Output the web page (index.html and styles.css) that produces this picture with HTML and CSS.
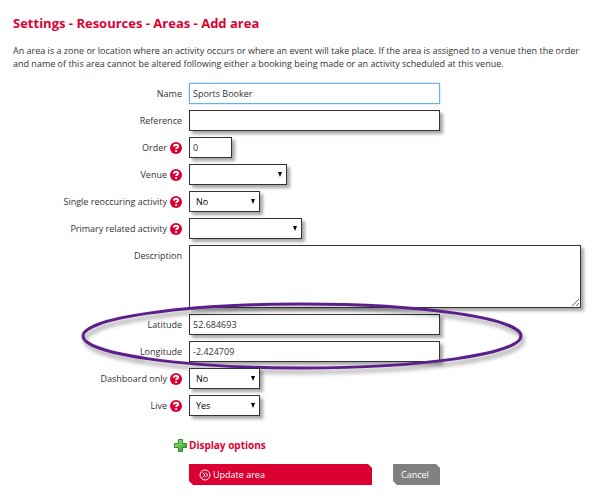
FILE: index.html
```html
<!DOCTYPE html>
<html lang="en">
<head>
    <meta charset="UTF-8">
    <title>Settings - Resources - Areas - Add area</title>
    <meta name="viewport" content="width=device-width, initial-scale=1">
    <link rel="stylesheet" href="styles.css">
</head>
<body>
    <svg class="sprite" aria-hidden="true">
        <symbol id="icon-help" viewBox="0 0 12 12">
            <circle cx="6" cy="6" r="6" fill="#dc0032"/>
            <path d="M3.900 4.600C4 3.300 4.800 2.800 6 2.800s2.200.6 2.200 1.600C8.200 5.600 6.100 5.500 6.100 7.100" fill="none" stroke="#fff" stroke-width="1.900"/>
            <circle cx="6.100" cy="9" r="1.100" fill="#fff"/>
        </symbol>
    </svg>
    <main>
        <h1>Settings - Resources - Areas - Add area</h1>
        <p class="intro">An area is a zone or location where an activity occurs or where an event will take place. If the area is assigned to a venue then the order and name of this area cannot be altered following either a booking being made or an activity scheduled at this venue.</p>
        <form>
            <div class="row">
                <label for="name">Name</label>
                <input type="text" id="name" class="long active" value="Sports Booker">
            </div>
            <div class="row">
                <label for="reference">Reference</label>
                <input type="text" id="reference" class="long">
            </div>
            <div class="row">
                <label for="order">Order <svg class="help"><use href="#icon-help"/></svg></label>
                <input type="text" id="order" class="tiny" value="0">
            </div>
            <div class="row">
                <label for="venue">Venue <svg class="help"><use href="#icon-help"/></svg></label>
                <div class="select venue">
                    <select id="venue"><option></option></select>
                </div>
            </div>
            <div class="row">
                <label for="single">Single reoccuring activity <svg class="help"><use href="#icon-help"/></svg></label>
                <div class="select">
                    <select id="single"><option>No</option><option>Yes</option></select>
                </div>
            </div>
            <div class="row">
                <label for="primary">Primary related activity <svg class="help"><use href="#icon-help"/></svg></label>
                <div class="select primary">
                    <select id="primary"><option></option></select>
                </div>
            </div>
            <div class="row">
                <label for="description">Description</label>
                <textarea id="description"></textarea>
            </div>
            <div class="coords">
                <div class="row">
                    <label for="latitude">Latitude</label>
                    <input type="text" id="latitude" class="long" value="52.684693">
                </div>
                <div class="row">
                    <label for="longitude">Longitude</label>
                    <input type="text" id="longitude" class="long" value="-2.424709">
                </div>
                <svg class="ring" viewBox="0 0 440 66" aria-hidden="true">
                    <ellipse cx="220" cy="33" rx="219" ry="32" fill="none" stroke="#5c1f8b" stroke-width="3"/>
                </svg>
            </div>
            <div class="row">
                <label for="dashboard">Dashboard only <svg class="help"><use href="#icon-help"/></svg></label>
                <div class="select">
                    <select id="dashboard"><option>No</option><option>Yes</option></select>
                </div>
            </div>
            <div class="row">
                <label for="live">Live <svg class="help"><use href="#icon-help"/></svg></label>
                <div class="select">
                    <select id="live"><option>Yes</option><option>No</option></select>
                </div>
            </div>
            <a class="options" href="#">
                <svg viewBox="0 0 13 13" aria-hidden="true">
                    <defs>
                        <linearGradient id="green" x1="0" y1="0" x2="1" y2="1">
                            <stop offset="0" stop-color="#a5e67c"/>
                            <stop offset="1" stop-color="#1fa31f"/>
                        </linearGradient>
                    </defs>
                    <path d="M4.500 .5h4v4h4v4h-4v4h-4v-4h-4v-4h4z" fill="url(#green)" stroke="#35893a" stroke-linejoin="round"/>
                </svg>
                Display options
            </a>
            <div class="buttons">
                <button type="submit" class="update">
                    <svg viewBox="0 0 12 12" aria-hidden="true">
                        <circle cx="6" cy="6" r="5"/>
                        <path d="M3.500 3.500L6 6 3.500 8.500M6.200 3.500L8.700 6 6.200 8.500"/>
                    </svg>
                    Update area
                </button>
                <button type="button" class="cancel">Cancel</button>
            </div>
        </form>
    </main>
</body>
</html>
```
FILE: styles.css
```css
* {
    box-sizing: border-box;
}

body {
    margin: 0;
    background-color: #fff;
    font-family: "Open Sans", sans-serif;
    font-size: 9px;
    line-height: 13px;
    color: #333;
}

.sprite {
    display: none;
}

main {
    padding: 14px 13px;
}

h1 {
    margin: 0 0 12px;
    font-size: 13px;
    line-height: 18px;
    color: #dc0032;
}

.intro {
    margin: 0 0 13px;
    padding-right: 10px;
}

form,
.coords {
    display: flex;
    flex-direction: column;
    gap: 6px;
}

.row {
    display: grid;
    grid-template-columns: 169px 1fr;
    column-gap: 7px;
}

label {
    display: flex;
    justify-content: flex-end;
    align-items: center;
    gap: 3px;
    height: 21px;
}

.help {
    width: 12px;
    height: 12px;
}

input,
select,
textarea {
    margin: 0;
    border: 1px solid #333;
    border-radius: 0;
    background-color: #fff;
    font: inherit;
    color: #333;
    box-shadow: 3px 3px 3px rgba(0, 0, 0, 0.35);
}

input {
    height: 21px;
    padding: 0 3px;
}

.long {
    width: 100%;
    max-width: 251px;
}

.tiny {
    width: 43px;
}

.active {
    border-color: #66aff0;
    box-shadow: 0 0 2px #a8d0f8;
    outline: none;
}

textarea {
    display: block;
    width: 100%;
    max-width: 392px;
    height: 63px;
}

/* Drop-downs */
.select {
    position: relative;
    width: 71px;
}

.select.venue {
    width: 98px;
}

.select.primary {
    width: 113px;
}

.select select {
    display: block;
    width: 100%;
    height: 21px;
    padding: 0 6px;
    appearance: none;
    color: #000;
}

.select::after {
    content: "";
    position: absolute;
    top: 8px;
    right: 5px;
    border: 2px solid transparent;
    border-top: 5px solid #000;
    border-bottom: 0;
}

/* Ring around latitude and longitude */
.coords {
    position: relative;
}

.ring {
    position: absolute;
    top: -11px;
    left: 69px;
    width: 440px;
    height: 66px;
    overflow: visible;
    pointer-events: none;
    filter: drop-shadow(2px 4px 2px rgba(0, 0, 0, 0.4));
}

.options {
    display: flex;
    align-items: center;
    gap: 2px;
    margin: 17px 0 6px 161px;
    font-size: 10px;
    font-weight: bold;
    color: #dc0032;
    text-decoration: none;
}

.options svg {
    width: 13px;
    height: 13px;
}

/* Buttons */
.buttons {
    display: flex;
    gap: 21px;
    margin-left: 176px;
}

button {
    display: flex;
    align-items: center;
    gap: 2px;
    height: 21px;
    border: none;
    font: inherit;
    color: #fff;
    cursor: pointer;
    clip-path: polygon(0 0, calc(100% - 4px) 0, 100% 4px, 100% 100%, 4px 100%, 0 calc(100% - 4px));
}

.update {
    width: 183px;
    padding: 0 10px;
    background-color: #dc0032;
}

.update svg {
    width: 12px;
    height: 12px;
    fill: none;
    stroke: #fff;
}

.cancel {
    width: 47px;
    padding: 0 8px;
    background-color: #808080;
}
```
